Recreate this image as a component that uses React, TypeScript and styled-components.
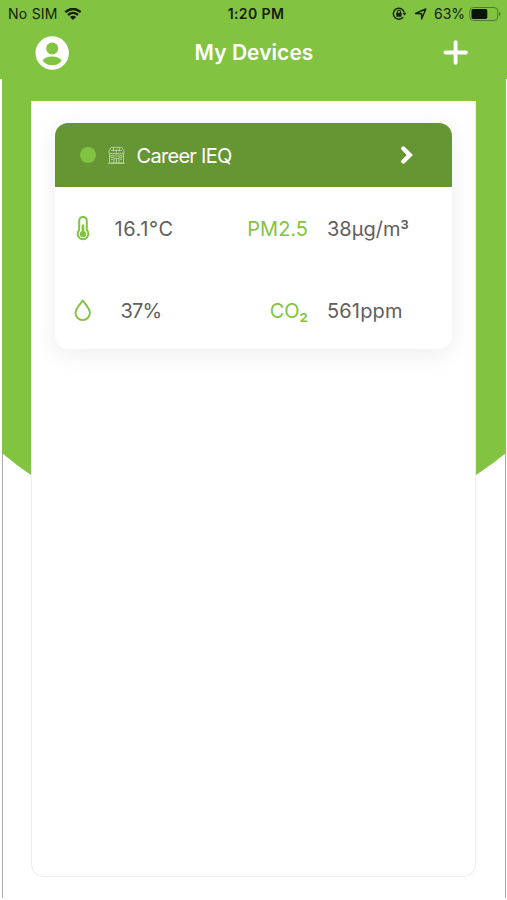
import React from "react";
import styled, { createGlobalStyle } from "styled-components";

const GREEN = "#82c341";
const DARK_GREEN = "#669534";

const GlobalStyle = createGlobalStyle`
  * { box-sizing: border-box; }
  body {
    margin: 0;
    background: #fff;
    font-family: Inter, "Liberation Sans", sans-serif;
  }
`;

const Screen = styled.div`
  width: 507px;
  height: 900px;
  display: flex;
  flex-direction: column;
  overflow: hidden;
  background: #fff;
`;

const StatusBar = styled.div`
  height: 28px;
  flex: none;
  display: grid;
  grid-template-columns: 1fr auto 1fr;
  align-items: center;
  padding: 0 6px 0 8px;
  background: ${GREEN};
  color: #14200a;
  font-size: 14px;
  line-height: 28px;
`;

const StatusGroup = styled.div<{ $end?: boolean }>`
  display: flex;
  align-items: center;
  justify-content: ${(p) => (p.$end ? "flex-end" : "flex-start")};
  white-space: nowrap;

  svg { display: block; flex: none; }
`;

const Carrier = styled.span`
  letter-spacing: 0.25px;
  margin-right: 6px;
`;

const Clock = styled.span`
  font-weight: 600;
  letter-spacing: 0.4px;
  padding-left: 3px;
`;

const Percent = styled.span`
  margin: 0 4px 0 7px;
  letter-spacing: -0.05px;
`;

const StatusGap = styled.span`
  width: 7px;
`;

const NavBar = styled.header`
  height: 51px;
  flex: none;
  display: grid;
  grid-template-columns: 1fr auto 1fr;
  align-items: start;
  padding: 0 38px 0 35px;
  background: ${GREEN};
`;

const NavButton = styled.button<{ $end?: boolean }>`
  height: 49px;
  padding: 0;
  border: 0;
  background: none;
  display: flex;
  align-items: center;
  justify-content: ${(p) => (p.$end ? "flex-end" : "flex-start")};
`;

const Title = styled.h1`
  margin: 0;
  padding-left: 4px;
  color: #fff;
  font-size: 21px;
  font-weight: 570;
  line-height: 49px;
  letter-spacing: 0.05px;
`;

const Content = styled.main`
  height: 819px;
  margin: 0 1px 0 2px;
  border: solid #aaa;
  border-width: 0 1px;
  display: grid;
`;

const Backdrop = styled.div`
  grid-area: 1 / 1;
  height: 460px;
  margin: 0 -1px;
  background: ${GREEN};
  clip-path: path("M0 0H504V374Q490 385.5 474 396H29Q14 386 0 374Z");
`;

const Panel = styled.section`
  grid-area: 1 / 1;
  width: 445px;
  height: 776px;
  margin: 22px 0 0 28px;
  padding: 22px 23px;
  background: #fff;
  border: 1px solid #ececec;
  border-top: 0;
  border-radius: 0 0 13px 13px;
  z-index: 1;
`;

const Card = styled.article`
  width: 397px;
  height: 226px;
  border-radius: 13px;
  overflow: hidden;
  background: #fff;
  box-shadow: 0 5px 24px rgba(0, 0, 0, 0.075);
`;

const CardHeader = styled.div`
  height: 64px;
  display: flex;
  align-items: center;
  padding: 0 38px 0 25px;
  background: ${DARK_GREEN};
  color: #fff;
`;

const StatusDot = styled.span`
  width: 16px;
  height: 16px;
  margin-right: 11.5px;
  border-radius: 50%;
  background: ${GREEN};
`;

const DeviceName = styled.span`
  flex: 1;
  margin-left: 12px;
  padding-top: 1px;
  font-size: 20px;
  letter-spacing: -0.7px;
`;

const Readings = styled.div`
  display: grid;
  grid-template-columns: 19px 80px 135px 1fr;
  grid-template-rows: 82px 82px;
  align-items: center;
  padding: 1px 0 0 19px;
  font-size: 20px;
  color: #606060;
  white-space: nowrap;

  svg { display: block; }
`;

const Value = styled.span<{ $indent?: number; $tracking?: number }>`
  padding-left: ${(p) => p.$indent ?? 0}px;
  letter-spacing: ${(p) => p.$tracking ?? 0}px;
`;

const Label = styled.span`
  text-align: right;
  color: ${GREEN};
`;

const ScriptDigit = styled.span`
  font-family: Roboto, Inter, sans-serif;
  font-size: 23px;
  line-height: 1;
`;

const WifiIcon = () => (
  <svg width="18" height="13" viewBox="0 0 18 13" fill="none" stroke="#14200a">
    <path d="M1.3 4.1Q9-2.2 16.7 4.1" strokeWidth="2.5" />
    <path d="M4 7Q9 2.8 14 7" strokeWidth="2.3" />
    <path d="M9 12.1L5.9 9Q9 6.7 12.1 9Z" fill="#14200a" stroke="none" />
  </svg>
);

const RotationLockIcon = () => (
  <svg width="15" height="14" viewBox="0 0 15 14" fill="none" stroke="#14200a">
    <path d="M12.1 5.1A5.5 5.5 0 1 0 11.2 10.1" strokeWidth="1.4" />
    <path d="M10.2 5.7H14.6L12.4 8.5Z" fill="#14200a" stroke="none" />
    <path d="M5.3 6V4.9a1.6 1.6 0 0 1 3.2 0V6" strokeWidth="1.1" />
    <rect x="4.3" y="5.8" width="5.2" height="4" rx=".5" fill="#14200a" stroke="none" />
  </svg>
);

const LocationIcon = () => (
  <svg width="13" height="13" viewBox="0 0 13 13" fill="none" stroke="#14200a" strokeWidth="1.4" strokeLinejoin="round">
    <path d="M11.8 1L7.6 11V5.7L1.5 5.5Z" />
  </svg>
);

const BatteryIcon = () => (
  <svg width="32" height="15" viewBox="0 0 32 15">
    <rect x=".9" y=".5" width="27.8" height="13" rx="3.6" fill="none" stroke="#527b29" strokeWidth="1" />
    <rect x="2.5" y="2.1" width="15.8" height="9.8" rx="1.6" fill="#0c1405" />
    <path d="M30 4.8Q31.6 5.5 31.6 7T30 9.2Z" fill="#527b29" />
  </svg>
);

const AccountIcon = () => (
  <svg width="34" height="34" viewBox="0 0 34 34">
    <circle cx="17.2" cy="17" r="16.7" fill="#fff" />
    <circle cx="17.2" cy="12.5" r="6" fill={GREEN} />
    <path d="M7.5 24.4Q11 20.2 17.2 20.5T26.9 24.4Q23 29.3 17.2 29.3T7.5 24.4Z" fill={GREEN} />
  </svg>
);

const PlusIcon = () => (
  <svg width="26" height="26" viewBox="0 0 26 26" stroke="#fff" strokeWidth="3.9" strokeLinecap="round">
    <path d="M12.6 2.3V22.7M2.4 12.5H22.8" />
  </svg>
);

const BuildingIcon = () => (
  <svg width="17" height="18" viewBox="0 0 17 18" fill="none" stroke="#c5dbae" strokeWidth=".8">
    <path d="M3.2 1.4H13.8L16 4.9V7.4H1V4.9ZM1.5 7.4V16.9H15.5V7.4M0 17.4H17" />
    <path d="M5.5 1.4V5.4M11.5 1.4V5.4M3.2 4.4H13.8M8.5 3.4V6.4M6 16.9V12.4H11V16.9M8.5 12.4V16.9" />
    <path d="M3 9.4H5.8V11.6H3ZM11.2 9.4H14V11.6H11.2ZM3 13.6H5M12 13.6H14M7 9.4L8.5 7.9L10 9.4L8.5 10.9Z" />
  </svg>
);

const ChevronIcon = () => (
  <svg width="14" height="20" viewBox="0 0 14 20" fill="none" stroke="#fff" strokeWidth="4.4" strokeLinecap="round">
    <path d="M3.3 3.5L9.8 10L3.3 16.5" />
  </svg>
);

const ThermometerIcon = () => (
  <svg width="18" height="26" viewBox="0 0 18 26" fill="none" stroke={GREEN}>
    <path d="M5.2 4.7a3.8 3.8 0 0 1 7.6 0V14a5.4 5.4 0 1 1-7.6 0Z" strokeWidth="2" />
    <circle cx="9" cy="18.1" r="3.2" fill={GREEN} stroke="none" />
    <path d="M9 8.5V18" strokeWidth="2.7" />
  </svg>
);

const DropIcon = () => (
  <svg width="18" height="24" viewBox="0 0 18 24" fill="none" stroke={GREEN} strokeWidth="1.9" strokeLinejoin="round">
    <path d="M8.7 1.4C6.7 4.7 1.5 9.4 1.5 13.9a7.2 7.2 0 0 0 14.4 0C15.9 9.4 10.7 4.7 8.7 1.4Z" />
  </svg>
);

export default function App() {
  return (
    <Screen>
      <GlobalStyle />
      <StatusBar>
        <StatusGroup>
          <Carrier>No SIM</Carrier>
          <WifiIcon />
        </StatusGroup>
        <Clock>1:20 PM</Clock>
        <StatusGroup $end>
          <RotationLockIcon />
          <StatusGap />
          <LocationIcon />
          <Percent>63%</Percent>
          <BatteryIcon />
        </StatusGroup>
      </StatusBar>
      <NavBar>
        <NavButton aria-label="Account"><AccountIcon /></NavButton>
        <Title>My Devices</Title>
        <NavButton $end aria-label="Add device"><PlusIcon /></NavButton>
      </NavBar>
      <Content>
        <Backdrop />
        <Panel>
          <Card>
            <CardHeader>
              <StatusDot />
              <BuildingIcon />
              <DeviceName>Career IEQ</DeviceName>
              <ChevronIcon />
            </CardHeader>
            <Readings>
              <ThermometerIcon />
              <Value $indent={21.5} $tracking={0.6}>16.1°C</Value>
              <Label>PM2.5</Label>
              <Value $indent={19}>38µg/m<ScriptDigit>³</ScriptDigit></Value>
              <DropIcon />
              <Value $indent={27.5} $tracking={-0.8}>37%</Value>
              <Label>CO<ScriptDigit>₂</ScriptDigit></Label>
              <Value $indent={19} $tracking={0.15}>561ppm</Value>
            </Readings>
          </Card>
        </Panel>
      </Content>
    </Screen>
  );
}
